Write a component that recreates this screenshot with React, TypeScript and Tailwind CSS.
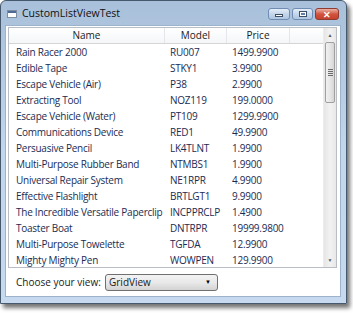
import React from "react";

const rows: [string, string, string][] = [
  ["Rain Racer 2000", "RU007", "1499.9900"],
  ["Edible Tape", "STKY1", "3.9900"],
  ["Escape Vehicle (Air)", "P38", "2.9900"],
  ["Extracting Tool", "NOZ119", "199.0000"],
  ["Escape Vehicle (Water)", "PT109", "1299.9900"],
  ["Communications Device", "RED1", "49.9900"],
  ["Persuasive Pencil", "LK4TLNT", "1.9900"],
  ["Multi-Purpose Rubber Band", "NTMBS1", "1.9900"],
  ["Universal Repair System", "NE1RPR", "4.9900"],
  ["Effective Flashlight", "BRTLGT1", "9.9900"],
  ["The Incredible Versatile Paperclip", "INCPPRCLP", "1.4900"],
  ["Toaster Boat", "DNTRPR", "19999.9800"],
  ["Multi-Purpose Towelette", "TGFDA", "12.9900"],
  ["Mighty Mighty Pen", "WOWPEN", "129.9900"],
];

export default function App() {
  return (
    <div className="w-[353px] h-[313px] bg-white overflow-hidden font-['Open_Sans',sans-serif] text-[10px]">
      <div className="w-[347px] h-[304px] rounded-t-[6px] border border-[#46586c] bg-gradient-to-b from-[#a9c0da] via-[#c2d6ec] to-[#c6d9ee] flex flex-col shadow-[3px_4px_4px_rgba(0,0,0,0.55)]">
        {/* Title bar */}
        <div className="h-[24px] flex items-start shrink-0">
          <div className="mt-[9px] ml-[6px] w-[10px] h-[8px] bg-white border border-[#7c8ea4] flex flex-col">
            <div className="h-[2px] bg-[#4d6b94]" />
          </div>
          <span className="ml-[5px] mt-[5px] text-[10.5px] leading-[14px] text-[#111]">CustomListViewTest</span>
          <div className="ml-auto mr-[7px] mt-[7px] flex gap-[2px]">
            <div className="w-[22px] h-[12px] rounded-[3px] border border-[#6f8db3] bg-gradient-to-b from-[#e4edf7] via-[#c4d6ea] to-[#aec6e2] flex items-end justify-center pb-[2px]">
              <div className="w-[8px] h-[3px] bg-white border border-[#3c4f66]" />
            </div>
            <div className="w-[21px] h-[12px] rounded-[3px] border border-[#6f8db3] bg-gradient-to-b from-[#e4edf7] via-[#c4d6ea] to-[#aec6e2] flex items-center justify-center">
              <div className="w-[8px] h-[6px] bg-white border border-[#3c4f66] flex items-center justify-center">
                <div className="w-[4px] h-[2px] bg-[#5f7fa6]" />
              </div>
            </div>
            <div className="w-[24px] h-[12px] rounded-[3px] border border-[#8e3b32] bg-gradient-to-b from-[#eab2a6] via-[#d0553f] to-[#c8402c] flex items-center justify-center">
              <span className="text-white text-[9px] leading-none font-bold">✕</span>
            </div>
          </div>
        </div>

        {/* Client area */}
        <div className="flex-1 ml-[4px] mr-[5px] mb-[6px] bg-white border border-[#9db3cc] flex flex-col">
          {/* List view */}
          <div className="ml-[2px] mr-[3px] mt-[1px] h-[241px] border border-[#b9bec6] flex overflow-hidden">
            <div className="flex-1 flex flex-col">
              {/* Header */}
              <div className="h-[16px] flex shrink-0 bg-gradient-to-b from-white to-[#f4f6f8] border-b border-[#d5d5d5] text-[#1a1a1a]">
                <div className="w-[156px] flex items-center justify-center border-r border-[#e3e6ea]">Name</div>
                <div className="w-[62px] flex items-center justify-center border-r border-[#e3e6ea]">Model</div>
                <div className="w-[63px] flex items-center justify-center border-r border-[#e3e6ea]">Price</div>
                <div className="flex-1" />
              </div>
              {/* Rows */}
              <div className="flex flex-col text-[#1b2c52] tracking-[-0.25px]">
                {rows.map(([n, m, p]) => (
                  <div key={n} className="h-[16px] flex items-center whitespace-nowrap">
                    <div className="w-[156px] shrink-0 pl-[7px]">{n}</div>
                    <div className="w-[62px] shrink-0 pl-[5px]">{m}</div>
                    <div className="w-[63px] shrink-0 pl-[5px]">{p}</div>
                  </div>
                ))}
              </div>
            </div>
            {/* Scrollbar */}
            <div className="w-[13px] flex flex-col bg-gradient-to-r from-[#e6e6e6] via-[#f2f2f2] to-[#e8e8e8] border-l border-[#ececec]">
              <div className="h-[14px] flex items-center justify-center text-[#5a5a5a] text-[5px] leading-none">▲</div>
              <div className="mx-[1px] h-[61px] rounded-[2px] border border-[#a0a0a0] bg-gradient-to-r from-[#f1f1f1] via-[#e6e6e6] to-[#d6d6d6] flex items-center justify-center">
                <div className="flex flex-col gap-[1px]">
                  <div className="w-[5px] h-[1px] bg-[#6c6c6c]" />
                  <div className="w-[5px] h-[1px] bg-[#6c6c6c]" />
                  <div className="w-[5px] h-[1px] bg-[#6c6c6c]" />
                  <div className="w-[5px] h-[1px] bg-[#6c6c6c]" />
                </div>
              </div>
              <div className="flex-1" />
              <div className="h-[14px] flex items-center justify-center text-[#5a5a5a] text-[5px] leading-none">▼</div>
            </div>
          </div>

          {/* Bottom row */}
          <div className="flex-1 flex items-center pl-[10px]">
            <span className="text-[#1a1a1a] w-[89px]">Choose your view:</span>
            <div className="w-[113px] h-[17px] rounded-[3px] border border-[#707070] bg-gradient-to-b from-[#f3f3f3] via-[#e9e9e9] to-[#d3d3d3] flex items-center pl-[3px] pr-[6px]">
              <span className="text-[#1a1a1a] flex-1">GridView</span>
              <span className="text-[6px] leading-none text-black">▼</span>
            </div>
          </div>
        </div>
      </div>
    </div>
  );
}
